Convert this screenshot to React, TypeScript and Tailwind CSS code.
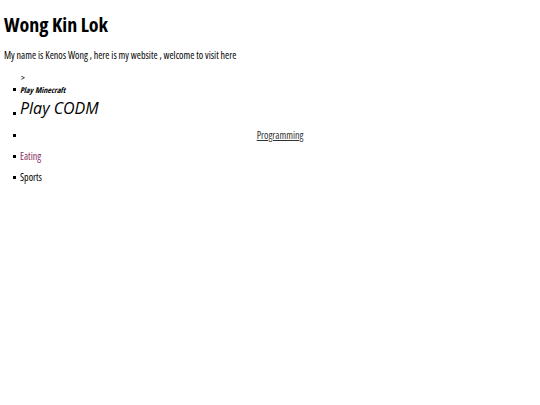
const base = "[font-family:'Open_Sans',sans-serif] [font-stretch:condensed]"

const Dot = ({ className = "" }: { className?: string }) => (
  <span className={`w-[3px] h-[3px] bg-black shrink-0 mr-[4px] ${className}`} />
)

export default function App() {
  return (
    <div className={`min-h-[405px] bg-white text-black ${base}`}>
      <div className="px-[4px] pt-[11px]">
        <h1 className="text-[20px] leading-[28px] font-bold">Wong Kin Lok</h1>
        <p className="mt-[9px] text-[10px] leading-[14px]">
          My name is Kenos Wong , here is my website , welcome to visit here
        </p>
      </div>
      <div className="mt-[11px] pl-[21px] text-[9px] leading-[10px]">&gt;</div>
      <ul className="pl-[13px] text-[10px] list-none">
        <li className="flex items-center leading-[13px]">
          <Dot />
          <span className="text-[8px] font-bold italic [font-family:'Open_Sans_Condensed','Open_Sans',sans-serif]">
            Play Minecraft
          </span>
        </li>
        <li className="flex items-end">
          <Dot className="mb-[5px]" />
          <span className="text-[16px] leading-[24px] italic [font-stretch:normal]">
            Play CODM
          </span>
        </li>
        <li className="mt-[9px] flex items-center leading-[13px]">
          <Dot />
          <span className="flex-1 text-center">
            <a href="#" className="underline text-[#333]">Programming</a>
          </span>
        </li>
        <li className="mt-[8px] flex items-center leading-[13px] text-[#8a2a62]">
          <Dot className="bg-black" />
          Eating
        </li>
        <li className="mt-[8px] flex items-center leading-[13px]">
          <Dot />
          Sports
        </li>
      </ul>
    </div>
  )
}
